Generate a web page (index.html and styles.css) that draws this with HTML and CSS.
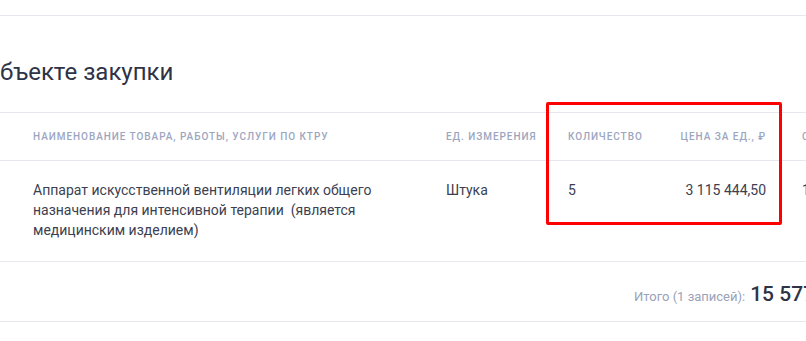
FILE: index.html
```html
<!DOCTYPE html>
<html lang="ru">
<head>
<meta charset="utf-8">
<title>Объект закупки</title>
<link rel="stylesheet" href="styles.css">
</head>
<body>
<div class="page">
  <div class="top-gap"></div>
  <h2 class="title">бъекте закупки</h2>
  <div class="table">
    <div class="row head">
      <div class="cell c-name">Наименование товара, работы, услуги по КТРУ</div>
      <div class="cell c-unit">Ед. измерения</div>
      <div class="cell c-qty">Количество</div>
      <div class="cell c-price">Цена за ед., ₽</div>
      <div class="cell c-sum">Стоимость, ₽</div>
    </div>
    <div class="row body">
      <div class="cell c-name">Аппарат искусственной вентиляции легких общего назначения для интенсивной терапии &nbsp;(является медицинским изделием)</div>
      <div class="cell c-unit">Штука</div>
      <div class="cell c-qty">5</div>
      <div class="cell c-price">3 115 444,50</div>
      <div class="cell c-sum">15 577 222,50</div>
    </div>
    <div class="total">
      <span class="total-label">Итого (1 записей):</span>
      <span class="total-value">15 577 222,50</span>
    </div>
  </div>
  <div class="highlight"></div>
</div>
</body>
</html>
```
FILE: styles.css
```css
html, body {
  margin: 0;
  padding: 0;
  background: #ffffff;
  overflow: hidden;
}
body {
  width: 806px;
  height: 341px;
  font-family: Roboto, "Liberation Sans", Arial, sans-serif;
  color: #3b3f51;
}
.page {
  position: relative;
  width: 1000px;
}
.top-gap {
  height: 15px;
  border-bottom: 1px solid #e6e7f1;
}
.title {
  margin: 0;
  padding: 40px 0 24px 0;
  font-size: 24px;
  line-height: 32px;
  font-weight: 400;
  color: #2e3346;
  border-bottom: 1px solid #e6e7f1;
}
.table {
  width: 1000px;
}
.row {
  display: grid;
  grid-template-columns: 428px 122px 110px 124px 216px;
  border-bottom: 1px solid #e6e7f1;
}
.cell {
  padding: 0 18px;
}
.c-name {
  padding-left: 33px;
}
.head {
  height: 47px;
  align-items: center;
}
.head .cell {
  font-size: 10px;
  font-weight: 500;
  letter-spacing: 0.95px;
  text-transform: uppercase;
  color: #9ca6bf;
  white-space: nowrap;
}
.body {
  padding: 19px 0 21px 0;
}
.body .cell {
  font-size: 14px;
  line-height: 20px;
  color: #3b3f51;
}
.body .c-name {
  padding-right: 46px;
}
.c-price {
  text-align: right;
}
.total {
  display: flex;
  align-items: baseline;
  gap: 5px;
  height: 60px;
  box-sizing: border-box;
  padding: 20px 0 0 634px;
  border-bottom: 1px solid #e6e7f1;
}
.total-label {
  font-size: 13px;
  color: #9aa2b8;
}
.total-value {
  font-size: 21px;
  font-weight: 500;
  color: #2e3346;
  white-space: nowrap;
}
.highlight {
  position: absolute;
  left: 546px;
  top: 102px;
  width: 230px;
  height: 117px;
  border: 3px solid #ff0000;
  border-radius: 2px;
}
```
